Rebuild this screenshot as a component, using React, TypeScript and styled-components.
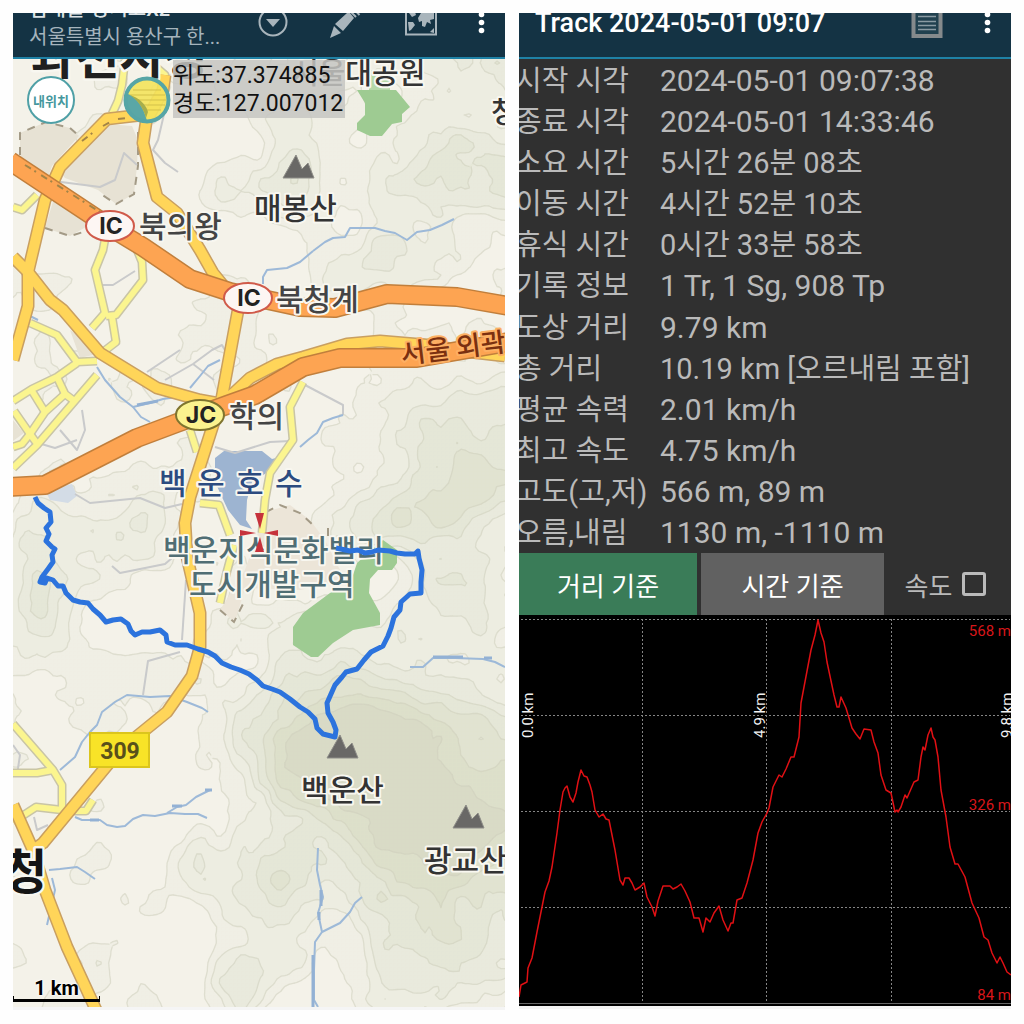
import React from "react";
import styled, { createGlobalStyle } from "styled-components";

const fontStack = `Roboto, "Noto Sans CJK KR", sans-serif`;

const GlobalStyle = createGlobalStyle`
  *, *::before, *::after { box-sizing: border-box; }
  body { margin: 0; background: #fefefe; font-family: ${fontStack}; }
  button { font: inherit; border: 0; padding: 0; margin: 0; cursor: pointer; }
`;

const Page = styled.main`
  display: grid;
  grid-template-columns: 1fr 1fr;
  align-items: start;
  gap: 14px;
  padding: 13px;
`;

const Panel = styled.section`
  overflow: hidden;
  min-width: 0;
  box-shadow: 0 3px 0 #f5f5f5;
`;

const Header = styled.header<{ $align: string }>`
  display: flex;
  align-items: ${(p) => p.$align};
  height: 46px;
  padding-left: 16px;
  overflow: hidden;
  background: #143344;
  border-bottom: 2px solid #1f82a6;
`;

const Place = styled.div`
  flex: 1;
  min-width: 0;
  padding-bottom: 6px;
  font-size: 20px;
  line-height: 28px;
  white-space: nowrap;
`;

const PlaceName = styled.div`
  color: #dde3e6;
  font-weight: 500;
`;

const PlaceAddress = styled.div`
  color: #a5b4bd;
`;

const TrackTitle = styled.h1`
  flex: 1;
  margin: 0;
  color: #fff;
  font-size: 27px;
  font-weight: 500;
  line-height: 20px;
  white-space: nowrap;
`;

const IconButton = styled.button<{ $width: number }>`
  flex: none;
  align-self: flex-start;
  width: ${(p) => p.$width}px;
  height: 44px;
  background: none;

  svg { display: block; width: 100%; height: 100%; }
`;

const MapArea = styled.div`
  position: relative;
  background: #f4f2e9;

  > svg { display: block; width: 100%; height: auto; }
`;

const Coordinates = styled.div`
  position: absolute;
  left: 160px;
  top: 1px;
  padding: 2px 2px 0 0;
  background: rgba(198, 198, 194, 0.85);
  color: #111;
  font-size: 23px;
  line-height: 28px;
  white-space: nowrap;
`;

const RoundButton = styled.button<{ $left: number }>`
  position: absolute;
  left: ${(p) => p.$left}px;
  top: 17px;
  width: 48px;
  height: 48px;
  border-radius: 50%;
  overflow: hidden;

  && { font-size: 13px; }
  svg { display: block; width: 48px; height: 48px; }
`;

const MyLocation = styled(RoundButton)`
  border: 2px solid #4fa0a6;
  background: #fff;
  color: #45979d;
  white-space: nowrap;

  && { font-weight: 700; }
`;

const Compass = styled(RoundButton)`
  background: none;
`;

const Scale = styled.div`
  position: absolute;
  left: 0;
  bottom: 5px;
  width: 87px;
  border-bottom: 3px solid #000;
  color: #000;
  font-size: 20px;
  font-weight: 700;
  line-height: 21px;
  text-align: center;
  text-shadow: 0 0 2px #fff, 0 0 2px #fff, 0 0 3px #fff;

  &::before, &::after {
    content: "";
    position: absolute;
    bottom: 0;
    width: 1px;
    height: 3px;
    background: #000;
  }
  &::before { left: 0; }
  &::after { right: 0; }
`;

const StatsPanel = styled(Panel)`
  background: #303030;
`;

const Stats = styled.table`
  width: 100%;
  height: 494px;
  border-collapse: collapse;
  table-layout: fixed;
  color: #bababa;
  font-size: 29px;
  line-height: 36px;
  white-space: nowrap;
`;

const StatName = styled.th`
  width: 141px;
  padding: 2px 0 0;
  font-weight: 400;
  text-align: left;
  text-indent: -4px;
`;

const StatValue = styled.td<{ $latin: boolean }>`
  padding: 2px 0 0;
  font-size: ${(p) => (p.$latin ? 30 : 29)}px;
`;

const Modes = styled.div`
  display: grid;
  grid-template-columns: 178fr 183fr 123fr;
  gap: 4px;
  height: 62px;
`;

const ModeButton = styled.button<{ $active?: boolean }>`
  background: ${(p) => (p.$active ? "#3a7c58" : "#616161")};
  color: #fff;

  && { font-size: 26px; }
`;

const SpeedToggle = styled.label`
  display: flex;
  align-items: center;
  justify-content: center;
  gap: 10px;
  padding-right: 8px;
  color: #bababa;
  font-size: 26px;
  white-space: nowrap;
`;

const Checkbox = styled.input`
  appearance: none;
  width: 24px;
  height: 24px;
  margin: 0;
  border: 3px solid #bababa;
  border-radius: 3px;
`;

const Chart = styled.svg`
  display: block;
  width: 100%;
  height: auto;
  background: #000;
`;

/* ---------- terrain ---------- */

const hills = [
  [470, 170, 90, 60, 0.55],
  [500, 75, 60, 40, 0.4],
  [300, 175, 50, 70, 0.35],
  [410, 260, 120, 30, 0.25],
  [480, 430, 100, 60, 0.6],
  [430, 510, 110, 50, 0.6],
  [470, 610, 80, 50, 0.45],
  [340, 740, 90, 80, 0.75],
  [470, 830, 120, 110, 0.85],
  [380, 790, 140, 110, 0.35],
  [35, 570, 40, 80, 0.5],
  [255, 880, 60, 50, 0.4],
  [235, 980, 40, 40, 0.35],
  [450, 970, 60, 60, 0.4],
  [120, 530, 50, 35, 0.25],
  [210, 180, 40, 40, 0.2],
  [100, 640, 100, 80, 0.12],
];

const tints = ["#f0efe5", "#edede1", "#e9eadd", "#e5e7d7", "#e1e3d1", "#dddfca", "#d9dbc6"];
const step = 4;
const originX = 13;
const originY = 59;
const cols = 123;
const rows = 237;

function hash(x: number, y: number) {
  const s = Math.sin(x * 127.1 + y * 311.7) * 43758.5453;
  return s - Math.floor(s);
}

function noise(x: number, y: number) {
  const ix = Math.floor(x);
  const iy = Math.floor(y);
  const fx = x - ix;
  const fy = y - iy;
  const u = fx * fx * (3 - 2 * fx);
  const v = fy * fy * (3 - 2 * fy);
  const top = hash(ix, iy) * (1 - u) + hash(ix + 1, iy) * u;
  const bottom = hash(ix, iy + 1) * (1 - u) + hash(ix + 1, iy + 1) * u;
  return top * (1 - v) + bottom * v - 0.5;
}

function heightAt(x: number, y: number) {
  let h = 0.03;
  for (const [cx, cy, rx, ry, peak] of hills) {
    h += peak * Math.exp(-(((x - cx) / rx) ** 2) - ((y - cy) / ry) ** 2);
  }
  return h + 0.34 * noise(x / 48, y / 48) + 0.16 * noise(x / 20, y / 20) + 0.06 * noise(x / 9, y / 9);
}

function buildTerrain() {
  const grid: number[][] = [];
  for (let j = 0; j <= rows; j++) {
    grid.push([]);
    for (let i = 0; i <= cols; i++) {
      grid[j].push(heightAt(originX + i * step, originY + j * step));
    }
  }
  return tints.map((tint, index) => {
    const level = 0.13 + index * 0.13;
    let area = "";
    let line = "";
    for (let j = 0; j < rows; j++) {
      for (let i = 0; i < cols; i++) {
        const x = originX + i * step;
        const y = originY + j * step;
        const corners = [
          [x, y, grid[j][i]],
          [x + step, y, grid[j][i + 1]],
          [x + step, y + step, grid[j + 1][i + 1]],
          [x, y + step, grid[j + 1][i]],
        ];
        const points: string[] = [];
        const crossings: string[] = [];
        corners.forEach(([ax, ay, ah], k) => {
          const [bx, by, bh] = corners[(k + 1) % 4];
          if (ah >= level) points.push(`${ax} ${ay}`);
          if (ah >= level !== bh >= level) {
            const t = (level - ah) / (bh - ah);
            const p = `${(ax + (bx - ax) * t).toFixed(1)} ${(ay + (by - ay) * t).toFixed(1)}`;
            points.push(p);
            crossings.push(p);
          }
        });
        if (points.length > 2) area += `M${points.join("L")}Z`;
        if (crossings.length === 2) line += `M${crossings.join("L")}`;
      }
    }
    return { tint, area, line };
  });
}

const terrain = buildTerrain();

function Terrain() {
  return (
    <g>
      {terrain.map(({ tint, area, line }) => (
        <React.Fragment key={tint}>
          <path d={area} fill={tint} stroke={tint} strokeWidth="0.8" />
          <path d={line} fill="none" stroke="#cfcfbd" strokeOpacity="0.55" strokeWidth="1.3" strokeLinecap="round" />
        </React.Fragment>
      ))}
    </g>
  );
}

/* ---------- roads, water and the track ---------- */

const streams = [
  "313,251 325,242 333,238 345,237 350,228 375,228 385,231 395,233 407,240 417,232 430,230 442,225 454,219",
  "313,251 300,262 287,268 267,270 263,277 263,284",
  "343,415 333,418 323,422 317,433 308,440 300,447",
  "97,367 105,380 120,397 133,407 150,403 163,399 177,397",
  "133,407 141,417 150,422",
  "220,360 208,366 200,376 190,388",
  "410,667 423,667 433,658 455,658 483,659 495,662 505,667",
  "208,712 202,708 187,702 170,696 150,697 127,695 115,702 102,712 97,725 90,732 82,742 75,757 60,770",
  "75,817 82,820 100,820 107,825 117,827 125,826 133,819 143,815 155,816 170,813 185,814 198,814 207,818",
  "167,813 177,807 186,805 196,797 210,790",
  "49,870 60,869 77,867 85,872 95,879",
  "28,315 38,320",
  "318,848 317,870 320,885 323,897 318,913 322,932 315,942 314,970 314,1000 318,1007",
  "322,932 340,923 350,912 355,903 362,897",
  "52,878 55,890 47,925",
];

const lanes = [
  "30,178 100,187 115,180 124,153 137,165",
  "165,83 165,110 158,140 153,150 165,163 178,172",
  "97,285 113,285 135,271",
  "147,372 165,360 180,350",
  "165,380 193,364 212,350 222,345 226,352",
  "193,364 214,380",
  "60,430 77,450 85,430 82,410",
  "38,443 55,448 77,440",
  "75,494 90,503 140,498 165,508 182,504",
  "112,566 120,573 165,564 172,558",
  "180,652 148,661 143,695",
  "186,580 182,640",
  "305,385 343,405 343,415",
  "215,447 235,453 270,442 290,441",
  "13,745 20,755 17,775",
  "34,817 37,830 48,825",
];

const minorRoads = [
  "125,60 122,85 118,101 112,114",
  "150,62 165,75 162,92",
  "13,207 22,210 37,195",
  "107,228 103,250 95,270 105,313 92,328",
  "133,240 142,262 143,280 116,315 106,316",
  "112,317 116,342 103,352",
  "30,323 57,335 77,362 97,361",
  "77,363 57,377 32,389 13,401",
  "97,375 67,410 37,445 13,468",
  "57,377 65,394 73,400",
  "65,394 45,412 30,434",
  "32,391 45,412",
  "14,411 30,434 38,445",
  "30,434 22,444 13,447",
  "190,430 197,452",
  "303,382 290,407 293,440 270,473 265,500 262,533",
  "200,503 219,505 230,535",
  "220,603 226,575 234,545",
  "13,724 53,770 62,785 62,810 36,807 13,822",
  "53,770 37,773 13,773",
  "93,800 86,811 62,811",
];

const mainRoads = [
  "165,75 163,90 150,114 107,119 60,167 45,200 28,272 28,306 13,360",
  "13,257 28,272 50,300 63,310 100,353 157,388 200,400 222,404",
  "147,116 143,143 157,197 177,213 200,250 213,273 239,305 222,397 190,497 185,523 187,557 200,613 200,647 192,676 167,712 119,751 43,843 33,850",
  "215,408 235,392 250,378 277,364 303,357 347,344 380,341 427,345 470,352 505,356",
  "13,805 33,850 45,890 67,947 97,1012",
];

const highways = [
  "10,161 105,224 143,247 190,279 230,292 300,307 335,308 387,294 457,297 509,306",
  "10,487 45,485 90,462 137,438 177,423 227,405 255,395 303,367 340,358 417,358 509,342",
];

const track =
  "35,497 38,503 44,508 50,512 51,522 46,528 49,534 46,541 52,547 55,549 52,555 53,562 48,569 42,577 40,582 45,583 47,578 53,580 58,586 63,586 66,593 73,600 80,602 88,603 93,609 100,615 106,622 113,620 121,619 128,624 131,631 135,635 142,632 150,632 160,630 166,635 167,642 175,645 187,645 198,649 208,652 215,656 222,663 231,667 240,670 249,674 257,680 263,686 272,689 280,692 290,699 300,707 308,712 315,719 317,728 323,734 335,737 336,730 333,722 328,713 327,703 331,694 335,685 342,677 346,672 357,669 364,660 371,652 383,646 388,636 391,628 394,617 400,610 401,602 410,594 421,593 421,582 422,570 419,558 418,551 415,554 405,554 397,553 390,551 378,550 372,552 365,553 358,550 350,551 336,548";

interface RoadsProps {
  lines: string[];
  width: number;
  fill: string;
  edge: string;
}

function Roads({ lines, width, fill, edge }: RoadsProps) {
  return (
    <g fill="none" strokeLinejoin="round">
      {lines.map((line) => (
        <polyline key={`edge-${line}`} points={line} stroke={edge} strokeWidth={width + 3} />
      ))}
      {lines.map((line) => (
        <polyline key={line} points={line} stroke={fill} strokeWidth={width} />
      ))}
    </g>
  );
}

const MapText = styled.text<{ $size?: number; $weight?: number; $halo?: string; $haloWidth?: number }>`
  font-family: "Noto Sans CJK KR", Roboto, sans-serif;
  font-size: ${(p) => p.$size ?? 30}px;
  font-weight: ${(p) => p.$weight ?? 500};
  stroke: ${(p) => p.$halo ?? "#f8f7f0"};
  stroke-width: ${(p) => p.$haloWidth ?? 4}px;
  stroke-linejoin: round;
  paint-order: stroke;
`;

const BadgeText = styled.text<{ $family: string }>`
  font-family: ${(p) => p.$family}, sans-serif;
  font-size: 23px;
  font-weight: 700;
  text-anchor: middle;
`;

function Peak({ x, y }: { x: number; y: number }) {
  return (
    <path
      transform={`translate(${x} ${y})`}
      d="M0 23 L13 0 L19 14 L25 8 L31 23 Z"
      fill="#696866"
      stroke="#8e8d88"
      strokeWidth="1"
    />
  );
}

function Junction({ x, y, label, fill, edge }: { x: number; y: number; label: string; fill: string; edge: string }) {
  return (
    <g>
      <ellipse cx={x} cy={y} rx="24" ry="15" fill={fill} stroke={edge} strokeWidth="2" />
      <BadgeText $family="Inter" x={x + 1} y={y + 8} fill="#222">{label}</BadgeText>
    </g>
  );
}

function TrailMap() {
  return (
    <svg viewBox="13 59 492 948" role="img" aria-label="백운산 등산 경로 지도">
      <rect x="13" y="59" width="492" height="948" fill="#f4f2e9" />
      <Terrain />
      <path d="M107 124 L132 126 L138 140 L137 166 L134 194 L116 204 L98 190 L65 178 L60 172 Z M20 150 L20 133 L46 122 L70 128 L79 136 L52 166 L45 185 L22 170 Z M55 195 L95 222 L70 236 L45 228 Z M13 420 L24 433 L13 441 Z M70 330 L85 340 L93 355 L80 358 Z" fill="#e7e2d4" />
      <path d="M265 512 L290 505 L310 520 L325 540 L345 580 L300 590 L245 588 L235 622 L220 610 L245 570 Z" fill="#ece5d8" />
      <path d="M20 170 V133 L46 122 L70 128 L79 136 M138 132 V166 L134 194 L116 204 L98 192 M45 228 L70 236 L90 230 M266 512 L280 505 L300 513 L312 524 M328 528 V542 M220 610 L234 622 L245 600 M22 172 L38 190" fill="none" stroke="#a39a86" strokeWidth="2" strokeDasharray="8 7" />
      <path d="M357 90 H396 L410 107 L402 114 V122 L392 124 L382 136 H370 L357 130 V123 L365 115 V103 Z" fill="#9ecb92" />
      <path d="M369 70 H390 V90 H369 Z" fill="#b6d9a8" />
      <path d="M383 540 L397 550 V563 L392 570 H378 L370 579 L369 593 L380 613 V625 L353 630 L333 643 L318 657 H311 L293 645 V627 L303 613 L330 593 L350 584 L357 563 Z" fill="#9ecb92" />
      <path d="M215 458 L224 451 L262 451 L272 459 L276 458 L268 472 L252 482 L247 500 L246 520 L252 529 L240 525 L228 510 L215 482 Z" fill="#9db4d1" />
      <path d="M45 490 L72 484 L77 496 L68 503 L50 500 Z" fill="#d3dce6" />

      <g fill="none" stroke="#c9cacb" strokeWidth="2" strokeLinejoin="round">
        {lanes.map((line) => (
          <polyline key={line} points={line} />
        ))}
      </g>
      <g fill="none" stroke="#9db9d8" strokeWidth="2" strokeLinejoin="round">
        {streams.map((line) => (
          <polyline key={line} points={line} />
        ))}
      </g>
      <path d="M313 955 V1007 M321 890 V906 M319 912 V920 M137 405 L158 401 M433 657 H463 M484 658 H492 M172 806 H182 M205 790 H212 M90 820 H99" fill="none" stroke="#93b1d4" strokeWidth="3" />

      <Roads lines={minorRoads} width={6} fill="#fbf58f" edge="#c9c5a6" />
      <Roads lines={mainRoads} width={10} fill="#ffd559" edge="#c99f60" />
      <Roads lines={highways} width={17} fill="#fda452" edge="#c17f3c" />
      <path d="M82 141 L95 131 M103 126 L110 122 M118 119 L127 118 M25 165 L100 212" fill="none" stroke="#a38447" strokeWidth="2" strokeDasharray="7 4 2 6" />

      <Peak x={283} y={155} />
      <Peak x={327} y={735} />
      <Peak x={453} y={805} />

      <MapText x="31" y="74" fill="#202020" $size={48} $weight={700} $haloWidth={5}>과천시청</MapText>
      <MapText x="292" y="84" fill="#333" $size={29}>서울대공원</MapText>
      <MapText x="491" y="123" fill="#333" $size={29}>청</MapText>
      <MapText x="254" y="219" fill="#333">매봉산</MapText>
      <MapText x="139" y="237" fill="#444">북의왕</MapText>
      <MapText x="276" y="310" fill="#444">북청계</MapText>
      <MapText x="229" y="427" fill="#444">학의</MapText>
      <MapText x="159 197 236 275" y="494" fill="#2c4b80">백운호수</MapText>
      <MapText x="163" y="561" fill="#506e74">백운지식문화밸리</MapText>
      <MapText x="189" y="595" fill="#506e74">도시개발구역</MapText>
      <MapText x="301" y="801" fill="#333">백운산</MapText>
      <MapText x="424" y="871" fill="#333">광교산</MapText>
      <MapText x="3" y="889" fill="#151515" $size={48} $weight={700} $haloWidth={5}>청</MapText>
      <MapText x="402" y="364" transform="rotate(-7 402 364)" fill="#7b3010" $size={27} $halo="#fdb063">서울 외곽</MapText>

      <Junction x={110} y={226} label="IC" fill="#fdf6f3" edge="#d05a4a" />
      <Junction x={248} y={298} label="IC" fill="#fdf6f3" edge="#d05a4a" />
      <Junction x={200} y={415} label="JC" fill="#fbf28e" edge="#7f742f" />
      <rect x="90" y="733" width="59" height="34" fill="#f8e327" stroke="#dbc51d" strokeWidth="2" />
      <BadgeText $family="Roboto" x="120" y="759" fill="#59501b">309</BadgeText>

      <path d="M255 513 H264 L260 529 Z M255 552 H264 L260 537 Z M240 530 V536 L256 533 Z M278 530 V536 L264 533 Z" fill="#c6323b" />
      <polyline points={track} fill="none" stroke="#2c73dd" strokeWidth="5" strokeLinejoin="round" />
    </svg>
  );
}

/* ---------- elevation profile ---------- */

const elevation =
  "519,997 521,985 527,982 528,968 532,958 537,932 542,907 545,892 549,881 552,867 557,833 560,810 563,792 565,788 567,786 570,797 573,802 576,793 578,782 581,770 584,776 587,777 590,785 592,792 595,810 599,817 603,814 606,819 609,820 615,850 620,880 623,885 625,878 629,878 632,883 635,890 640,887 644,883 647,897 652,907 655,916 658,901 660,895 663,886 670,886 673,889 677,887 681,884 685,891 690,902 694,918 699,918 703,932 706,918 710,922 714,913 719,906 723,920 728,931 731,923 733,923 737,900 742,898 747,883 753,860 758,833 762,822 767,813 769,808 773,787 779,775 782,777 786,769 791,757 794,757 799,737 801,703 804,687 811,650 815,635 818,620 821,633 824,642 827,662 834,695 837,707 839,707 841,697 846,708 852,728 856,734 860,739 864,729 871,730 874,742 878,753 881,775 886,790 891,793 895,812 897,810 898,812 901,807 905,795 907,798 914,782 918,780 921,757 923,747 925,750 928,735 931,728 933,737 935,740 938,757 941,790 946,817 950,847 955,864 958,864 965,877 972,903 979,918 984,937 988,940 992,953 997,963 1000,957 1003,963 1007,972 1011,975";

const ChartText = styled.text`
  font-family: Roboto, sans-serif;
  font-size: 15px;
`;

function ElevationChart() {
  return (
    <Chart viewBox="519 615 492 391" role="img" aria-label="고도 그래프">
      <g stroke="#858585" strokeWidth="1" strokeDasharray="2 2">
        {[619.5, 715.5, 811.5, 907.5].map((y) => (
          <line key={y} x1="521" x2="1010" y1={y} y2={y} />
        ))}
        {[642.5, 766.5, 891.5].map((x) => (
          <line key={x} x1={x} x2={x} y1="619" y2="1003" />
        ))}
      </g>
      <line x1="519" x2="1011" y1="1003.5" y2="1003.5" stroke="#666" />
      <polyline points={elevation} fill="none" stroke="#e01014" strokeWidth="1.5" strokeLinejoin="round" />
      <g fill="#f2f2f2">
        <ChartText transform="translate(533 738) rotate(-90)">0.0 km</ChartText>
        <ChartText transform="translate(765 738) rotate(-90)">4.9 km</ChartText>
        <ChartText transform="translate(1012 738) rotate(-90)">9.8 km</ChartText>
      </g>
      <g fill="#d8161a" textAnchor="end">
        <ChartText x="1011" y="636">568 m</ChartText>
        <ChartText x="1011" y="810">326 m</ChartText>
        <ChartText x="1011" y="1000">84 m</ChartText>
      </g>
    </Chart>
  );
}

/* ---------- icons ---------- */

function DotsIcon() {
  return (
    <svg viewBox="0 0 47 44" fill="#fff" aria-hidden="true">
      <circle cx="23.5" cy="1.5" r="2.8" />
      <circle cx="23.5" cy="9.5" r="2.8" />
      <circle cx="23.5" cy="17.5" r="2.8" />
    </svg>
  );
}

function DownIcon() {
  return (
    <svg viewBox="0 0 74 44" aria-hidden="true">
      <circle cx="37" cy="9" r="13.5" fill="none" stroke="#a9b5bc" strokeWidth="2" />
      <path d="M30 6 H44 L37 14 Z" fill="#a9b5bc" />
    </svg>
  );
}

function PencilIcon() {
  return (
    <svg viewBox="0 0 74 44" fill="#a9b5bc" aria-hidden="true">
      <path d="M20 25 L24 13 L31 20 Z M25 11 L37 0 H40 L44 5 L33 18 Z" />
      <path d="M40 -2 L46 4 M43.500 -4 L49.500 2" fill="none" stroke="#a9b5bc" strokeWidth="2" />
    </svg>
  );
}

function MapIcon() {
  return (
    <svg viewBox="0 0 74 44" aria-hidden="true">
      <rect x="22" y="-8" width="30" height="29.5" fill="#143344" stroke="#a9b5bc" strokeWidth="2" />
      <path d="M25 0 L30 -4 L32 2 L28 4 Z M24 9 L29 9 L31 12 L27 17 L25 18 Z M34 5 L37 0 H43 L50 0 L50 6 L46 7 L47 11 L43 9 L41 14 L38 13 L38 8 L35 9 Z M46 19 L50 15 V20 Z" fill="#a9b5bc" />
    </svg>
  );
}

function ListIcon() {
  return (
    <svg viewBox="0 0 74 44" aria-hidden="true">
      <rect x="23.5" y="-10" width="27" height="33" fill="#21414f" stroke="#858a8c" strokeWidth="4" />
      <path d="M28 3.5 H46 M28 8.5 H46 M28 12.5 H46 M28 16.5 H46" stroke="#8a9ba3" strokeWidth="1.5" />
    </svg>
  );
}

function CompassIcon() {
  return (
    <svg viewBox="0 0 48 48" aria-hidden="true">
      <circle cx="24" cy="24" r="21" fill="#f4e35c" fillOpacity="0.9" />
      <path d="M10 14 H38 M6 19 H42 M10 24 H43 M14 29 H42 M18 34 H38" stroke="#d3c14a" strokeWidth="1" />
      <path d="M5 18 C14 22 20 30 24 45 C12 45 3 36 3 24 Z" fill="#5aa7a6" />
      <path d="M7 19 C16 22 23 28 25 36 L23 42 C20 31 15 25 7 19 Z" fill="#a8ae4b" />
      <circle cx="24" cy="24" r="21.5" fill="none" stroke="#56a5a6" strokeWidth="4" />
    </svg>
  );
}

const stats: [string, string][] = [
  ["시작 시각", "2024-05-01 09:07:38"],
  ["종료 시각", "2024-05-01 14:33:46"],
  ["소요 시간", "5시간 26분 08초"],
  ["이동 시간", "4시간 52분 10초"],
  ["휴식 시간", "0시간 33분 58초"],
  ["기록 정보", "1 Tr, 1 Sg, 908 Tp"],
  ["도상 거리", "9.79 km"],
  ["총 거리", "10.19 km [오르내림 포함]"],
  ["평균 속력", "2.01 km/h"],
  ["최고 속도", "4.75 km/h"],
  ["고도(고,저)", "566 m, 89 m"],
  ["오름,내림", "1130 m, -1110 m"],
];

const hangul = /[가-힣]/;

export default function App() {
  return (
    <>
      <GlobalStyle />
      <Page>
        <Panel>
          <Header $align="flex-end">
            <Place>
              <PlaceName>김대월-양시코X2</PlaceName>
              <PlaceAddress>서울특별시 용산구 한...</PlaceAddress>
            </Place>
            <IconButton $width={74} aria-label="펼치기"><DownIcon /></IconButton>
            <IconButton $width={74} aria-label="그리기"><PencilIcon /></IconButton>
            <IconButton $width={74} aria-label="지도 선택"><MapIcon /></IconButton>
            <IconButton $width={47} aria-label="메뉴"><DotsIcon /></IconButton>
          </Header>
          <MapArea>
            <TrailMap />
            <Coordinates>
              <div>위도:37.374885</div>
              <div>경도:127.007012</div>
            </Coordinates>
            <MyLocation $left={14}>내위치</MyLocation>
            <Compass $left={110} aria-label="나침반"><CompassIcon /></Compass>
            <Scale>1 km</Scale>
          </MapArea>
        </Panel>

        <StatsPanel>
          <Header $align="flex-start">
            <TrackTitle>Track 2024-05-01 09:07</TrackTitle>
            <IconButton $width={74} aria-label="목록"><ListIcon /></IconButton>
            <IconButton $width={47} aria-label="메뉴"><DotsIcon /></IconButton>
          </Header>
          <Stats>
            <tbody>
              {stats.map(([name, value]) => (
                <tr key={name}>
                  <StatName scope="row">{name}</StatName>
                  <StatValue $latin={!hangul.test(value)}>{value}</StatValue>
                </tr>
              ))}
            </tbody>
          </Stats>
          <Modes>
            <ModeButton $active>거리 기준</ModeButton>
            <ModeButton>시간 기준</ModeButton>
            <SpeedToggle>
              속도
              <Checkbox type="checkbox" />
            </SpeedToggle>
          </Modes>
          <ElevationChart />
        </StatsPanel>
      </Page>
    </>
  );
}
